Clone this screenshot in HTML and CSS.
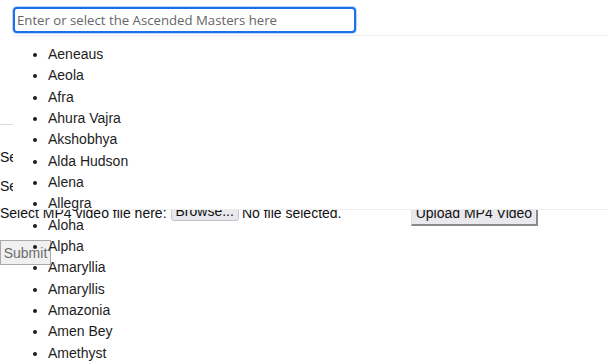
FILE: index.html
```html
<!DOCTYPE html>
<html lang="en">
<head>
<meta charset="utf-8">
<title>Ascended Masters</title>
<link rel="stylesheet" href="styles.css">
</head>
<body>
<div class="page">
  <div class="search">
    <input class="combo-input" type="text" placeholder="Enter or select the Ascended Masters here">
  </div>
  <div class="rule"></div>
  <div class="fields">
    <div class="field">Select an Ascended Master:</div>
    <div class="field">Select a category:</div>
  </div>
  <div class="upload-row">
    <span class="label">Select MP4 video file here:</span>
    <button class="browse" type="button">Browse...</button>
    <span class="nofile">No file selected.</span>
    <button class="upload" type="button">Upload MP4 Video</button>
  </div>
  <button class="submit" type="button">Submit</button>
</div>
<div class="dropdown"></div>
<ul class="masters">
  <li>Aeneaus</li>
  <li>Aeola</li>
  <li>Afra</li>
  <li>Ahura Vajra</li>
  <li>Akshobhya</li>
  <li>Alda Hudson</li>
  <li>Alena</li>
  <li>Allegra</li>
  <li>Aloha</li>
  <li>Alpha</li>
  <li>Amaryllia</li>
  <li>Amaryllis</li>
  <li>Amazonia</li>
  <li>Amen Bey</li>
  <li>Amethyst</li>
</ul>
</body>
</html>
```
FILE: styles.css
```css
html, body {
  margin: 0;
  padding: 0;
  background: #fff;
  overflow: hidden;
}
body {
  font-family: "Liberation Sans", Arial, sans-serif;
  font-size: 14px;
  color: #111;
  width: 608px;
  height: 364px;
  position: relative;
}
.page {
  display: flex;
  flex-direction: column;
  align-items: flex-start;
}
.search {
  height: 36px;
  padding-left: 13px;
  padding-top: 7px;
  box-sizing: border-box;
}
.combo-input {
  width: 343px;
  height: 26px;
  box-sizing: border-box;
  border: 2px solid #1f6fe8;
  border-radius: 4px;
  box-shadow: 0 0 0 1px #b9d4fb;
  padding: 0 2px;
  font-family: "Open Sans", "Noto Sans", sans-serif;
  font-size: 13.2px;
  color: #333;
  outline: none;
}
.combo-input::placeholder {
  color: #666;
}
.rule {
  margin-top: 88px;
  width: 100%;
  height: 1px;
  background: #dcdcdc;
}
.fields {
  padding-top: 18px;
}
.field {
  height: 29px;
  line-height: 29px;
  white-space: nowrap;
}
.upload-row {
  display: flex;
  align-items: center;
  height: 24px;
  white-space: nowrap;
}
.browse {
  margin-left: 4px;
  height: 19px;
  padding: 0 4px;
  font-family: "Liberation Sans", Arial, sans-serif;
  font-size: 14px;
  color: #111;
  background: #e9e9ed;
  border: 1px solid #c4c4c8;
  border-radius: 3px;
  margin-top: -4px;
}
.nofile {
  margin-left: 3px;
  width: 169px;
}
.upload {
  height: 24px;
  width: 127px;
  padding: 0;
  font-family: "Liberation Sans", Arial, sans-serif;
  font-size: 14px;
  color: #111;
  background: #e9e9ed;
  border: 1px solid #e0e0e0;
  border-right: 2px solid #8a8a8a;
  border-bottom: 2px solid #8a8a8a;
  margin-top: 1px;
}
.submit {
  margin-top: 15px;
  width: 51px;
  height: 25px;
  padding: 0;
  font-family: "Liberation Sans", Arial, sans-serif;
  font-size: 14px;
  color: #6d6d6d;
  background: #f0f0f0;
  border: 1px solid #a9a9a9;
}
.dropdown {
  position: absolute;
  left: 13px;
  right: 0;
  top: 35px;
  height: 173px;
  background: #fff;
  border-top: 1px solid #ececec;
  border-bottom: 1px solid #ececec;
}
.masters {
  position: absolute;
  left: 0;
  top: 44px;
  margin: 0;
  padding-left: 48px;
  list-style: disc;
  color: #1d1d1d;
  line-height: 21.35px;
  font-size: 14px;
}
```
